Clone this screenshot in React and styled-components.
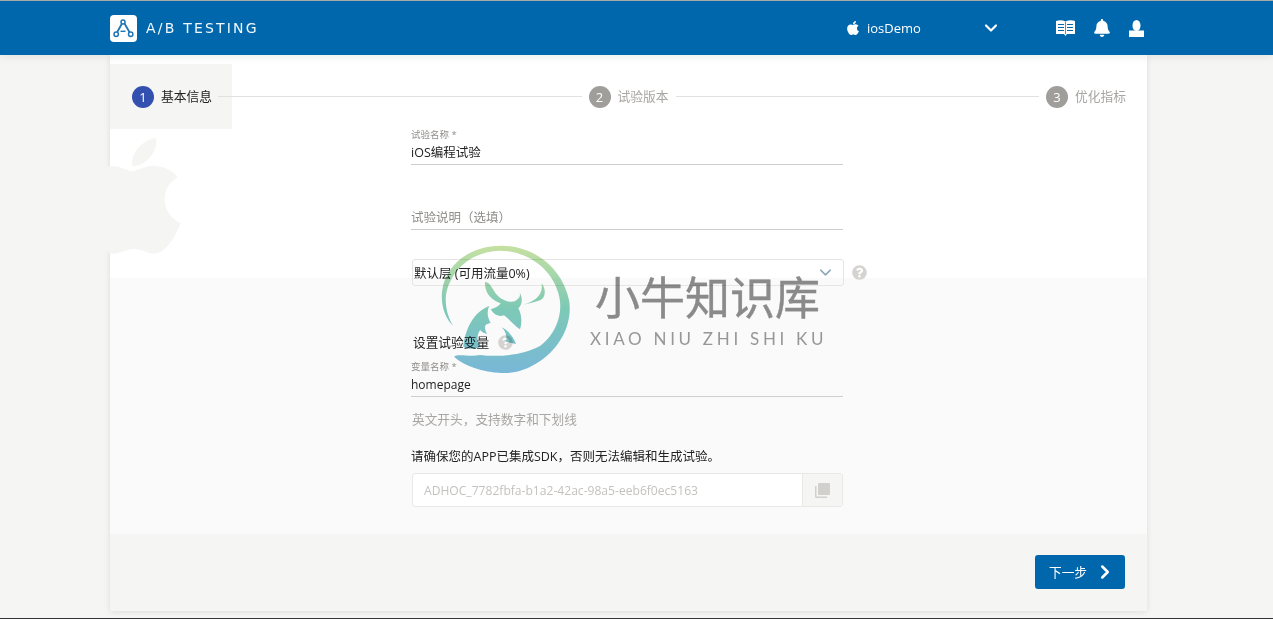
import styled, { createGlobalStyle } from 'styled-components';
import { FaApple, FaBell, FaQuestionCircle } from 'react-icons/fa';
import { FiChevronDown, FiChevronRight } from 'react-icons/fi';

const GlobalStyle = createGlobalStyle`
    * { box-sizing: border-box; }
    body {
        margin: 0;
        background: #f5f5f4;
        font-family: 'Open Sans', 'Noto Sans CJK SC', sans-serif;
        color: #222;
    }
`;

function LogoIcon() {
    return (
        <svg width="27" height="27" viewBox="0 0 27 27" fill="none" stroke="#1f76b6">
            <path d="M12 8.5 L7 17.5 M14.5 8.5 L19.7 17.5" strokeWidth="1.8" />
            <path d="M10.5 16.3 H15.5" strokeWidth="1.4" />
            <circle cx="13" cy="7" r="2" strokeWidth="1.5" />
            <circle cx="6.2" cy="19.3" r="2.2" strokeWidth="1.5" />
            <circle cx="20.7" cy="19.3" r="2.2" strokeWidth="1.5" />
        </svg>
    );
}

function BookIcon() {
    return (
        <svg width="19" height="16" viewBox="0 0 19 16">
            <path d="M0 1 C3 0 6.5 0 9.5 1.5 C12.5 0 16 0 19 1 V14 H11 L9.5 16 L8 14 H0 Z" fill="#fff" />
            <path d="M2 4.5 H8 M11 4.5 H17 M2 7.5 H8 M11 7.5 H17 M2 10.5 H8 M11 10.5 H17" stroke="#0067ac" strokeWidth="1" />
            <path d="M9.5 2 V14" stroke="#0067ac" strokeWidth="0.7" />
        </svg>
    );
}

function UserIcon() {
    return (
        <svg width="15" height="17" viewBox="0 0 15 17" fill="#fff">
            <ellipse cx="7.5" cy="5.5" rx="4" ry="5.5" />
            <rect x="0" y="10.5" width="15" height="6.5" />
        </svg>
    );
}

function CopyIcon() {
    return (
        <svg width="15" height="15" viewBox="0 0 15 15">
            <path d="M0 3 H1.5 V13.5 H12 V15 H1.5 C0.6 15 0 14.4 0 13.5 Z" fill="#d2d0cd" />
            <rect x="3" y="0" width="12" height="12" rx="1" fill="#d2d0cd" />
        </svg>
    );
}

function BullMark() {
    return (
        <svg width="150" height="140" viewBox="0 0 450 420">
            <defs>
                <linearGradient id="bull" x1="0" y1="16" x2="0" y2="400" gradientUnits="userSpaceOnUse">
                    <stop offset="0" stopColor="#c6e0a0" />
                    <stop offset="0.5" stopColor="#7fcdba" />
                    <stop offset="1" stopColor="#7abbdc" />
                </linearGradient>
            </defs>
            <g fill="url(#bull)">
                <path d="M72 350 C85 340 120 352 150 345 C210 352 280 345 330 318 C370 290 405 225 385 160 C365 85 290 32 210 32 C120 34 60 95 48 165 C44 200 55 235 70 258 C45 235 32 195 36 155 C45 75 120 16 215 17 C320 19 400 90 418 185 C427 260 385 330 320 370 C285 392 250 401 215 399 C160 396 100 378 72 350 Z" />
                <path d="M165 126 C186 126 190 165 218 178 C235 188 255 188 262 178 C270 172 272 165 268 155 C280 175 276 195 265 205 C276 225 276 250 270 268 C255 258 240 240 222 226 C205 232 190 222 182 208 C195 205 205 200 212 190 C190 182 163 165 165 126 Z" />
                <path d="M178 198 C130 215 105 270 100 320 C115 328 135 328 152 320 C130 290 150 258 182 248 C172 232 170 215 178 198 Z" />
                <path d="M280 195 C310 185 340 170 335 130 C350 150 346 175 330 181 C315 186 295 191 280 195 Z" />
                <path d="M150 270 C155 255 165 250 170 248 C162 260 165 272 172 282 C162 280 155 276 150 270 Z" />
                <path d="M215 262 C235 272 250 290 258 312 L228 305 C232 292 228 275 215 262 Z" />
            </g>
        </svg>
    );
}

export default function App() {
    return (
        <Page>
            <GlobalStyle />
            <Header>
                <Logo><LogoIcon /></Logo>
                <Brand>A/B TESTING</Brand>
                <AppSwitch>
                    <FaApple size={16} color="#fff" />
                    <AppName>iosDemo</AppName>
                    <FiChevronDown size={20} color="#fff" strokeWidth={2.6} />
                </AppSwitch>
                <HeaderIcons>
                    <BookIcon />
                    <FaBell size={18} color="#fff" />
                    <UserIcon />
                </HeaderIcons>
            </Header>
            <Card>
                <Steps>
                    <Step $active>
                        <StepNum $active>1</StepNum>
                        <StepName $active>基本信息</StepName>
                    </Step>
                    <Connector $first />
                    <Step>
                        <StepNum>2</StepNum>
                        <StepName>试验版本</StepName>
                    </Step>
                    <Connector />
                    <Step>
                        <StepNum>3</StepNum>
                        <StepName>优化指标</StepName>
                    </Step>
                </Steps>
                <Body>
                    <AppleMark><FaApple size={132} color="#f5f5f4" /></AppleMark>
                    <Form>
                        <Field>
                            <Label>试验名称 *</Label>
                            <Value>iOS编程试验</Value>
                        </Field>
                        <Field $gap={29}>
                            <Label />
                            <Value $muted>试验说明（选填）</Value>
                        </Field>
                        <SelectRow>
                            <Select>
                                默认层 (可用流量0%)
                                <FiChevronDown size={19} color="#8fa9b8" />
                            </Select>
                            <FaQuestionCircle size={15} color="#d5d3d0" />
                        </SelectRow>
                        <SectionTitle>
                            设置试验变量
                            <FaQuestionCircle size={15} color="#d5d3d0" />
                        </SectionTitle>
                        <Field $gap={11}>
                            <Label>变量名称 *</Label>
                            <Value $latin>homepage</Value>
                        </Field>
                        <Hint>英文开头，支持数字和下划线</Hint>
                        <Notice>请确保您的APP已集成SDK，否则无法编辑和生成试验。</Notice>
                        <KeyGroup>
                            <KeyText>ADHOC_7782fbfa-b1a2-42ac-98a5-eeb6f0ec5163</KeyText>
                            <CopyAddon><CopyIcon /></CopyAddon>
                        </KeyGroup>
                    </Form>
                </Body>
                <Footer>
                    <NextButton>
                        <NextLabel>下一步</NextLabel>
                        <FiChevronRight size={22} color="#fff" strokeWidth={2.8} />
                    </NextButton>
                </Footer>
            </Card>
            <Watermark>
                <BullMark />
                <WatermarkText>
                    <WatermarkName>小牛知识库</WatermarkName>
                    <WatermarkPinyin>XIAO NIU ZHI SHI KU</WatermarkPinyin>
                </WatermarkText>
            </Watermark>
        </Page>
    );
}

const Page = styled.div`
    position: relative;
    height: 100vh;
    overflow: hidden;
    border-top: 1px solid #a8a8a8;
    border-bottom: 1px solid #333;
`;

const Header = styled.header`
    position: relative;
    z-index: 2;
    height: 54px;
    padding: 0 129px 0 110px;
    display: flex;
    align-items: center;
    background: #0067ac;
    box-shadow: 0 2px 8px rgba(0, 0, 0, 0.08);
`;

const Logo = styled.div`
    width: 27px;
    height: 27px;
    border-radius: 4px;
    background: #fff;
    display: flex;
`;

const Brand = styled.div`
    margin-left: 9px;
    flex: 1;
    font-family: 'DejaVu Sans', sans-serif;
    font-size: 14px;
    letter-spacing: 2.2px;
    white-space: nowrap;
    color: #f2f8fc;
`;

const AppSwitch = styled.div`
    width: 156px;
    display: flex;
    align-items: center;
`;

const AppName = styled.span`
    margin-left: 6px;
    flex: 1;
    font-size: 13px;
    color: #fff;
`;

const HeaderIcons = styled.div`
    margin-left: 55px;
    display: flex;
    align-items: center;
    gap: 18px;
`;

const Card = styled.main`
    width: 1037px;
    margin-left: 110px;
    padding-top: 9px;
    background: #fff;
    box-shadow: 0 1px 6px rgba(0, 0, 0, 0.1);
`;

const Steps = styled.div`
    height: 65px;
    padding-right: 21px;
    display: flex;
    align-items: center;
`;

const Step = styled.div`
    height: 65px;
    padding: ${(p) => (p.$active ? '0 20px 0 22px' : '0')};
    display: flex;
    align-items: center;
    gap: 7px;
    background: ${(p) => (p.$active ? '#f5f5f4' : 'transparent')};
`;

const StepNum = styled.div`
    width: 22px;
    height: 22px;
    border-radius: 50%;
    display: flex;
    align-items: center;
    justify-content: center;
    font-size: 13px;
    color: #fff;
    background: ${(p) => (p.$active ? '#3350b0' : '#a09e9a')};
`;

const StepName = styled.div`
    padding-bottom: 2px;
    font-size: 12.75px;
    color: ${(p) => (p.$active ? '#222' : '#a8a6a3')};
`;

const Connector = styled.div`
    flex: 1;
    height: 1px;
    margin: 0 7px;
    margin-left: ${(p) => (p.$first ? '-14px' : '7px')};
    background: #e2e1df;
`;

const Body = styled.div`
    position: relative;
    padding: 0 0 27px 301px;
    background: linear-gradient(#fff 0, #fff 149px, #fafafa 149px);
`;

const AppleMark = styled.div`
    position: absolute;
    left: -44px;
    top: 1px;
    line-height: 0;
`;

const Form = styled.div`
    position: relative;
    width: 470px;
`;

const Field = styled.div`
    width: 432px;
    height: 36px;
    margin-top: ${(p) => p.$gap || 0}px;
    border-bottom: 1px solid #cfcecc;
`;

const Label = styled.div`
    height: 13px;
    font-size: 9.5px;
    line-height: 11px;
    color: #8f8d8a;
`;

const Value = styled.div`
    height: 22px;
    font-size: ${(p) => (p.$latin ? 12 : 12.5)}px;
    line-height: 22px;
    color: ${(p) => (p.$muted ? '#8f8d8a' : '#222')};
`;

const SelectRow = styled.div`
    margin-top: 29px;
    display: flex;
    align-items: center;
    gap: 8px;
`;

const Select = styled.div`
    width: 432px;
    height: 27px;
    margin-left: 1px;
    padding: 0 8px 0 1px;
    border: 1px solid #e6e5e3;
    border-radius: 3px;
    display: flex;
    align-items: center;
    justify-content: space-between;
    font-size: 12.5px;
`;

const SectionTitle = styled.div`
    margin: 48px 0 0 2px;
    height: 16px;
    display: flex;
    align-items: center;
    gap: 9px;
    font-size: 12.7px;
    line-height: 16px;
`;

const Hint = styled.div`
    margin: 14px 0 0 1px;
    font-size: 12.7px;
    line-height: 16px;
    color: #a8a6a3;
`;

const Notice = styled.div`
    margin-top: 22px;
    font-size: 12.5px;
    line-height: 16px;
`;

const KeyGroup = styled.div`
    width: 431px;
    height: 34px;
    margin: 8px 0 0 1px;
    border: 1px solid #e8e8e7;
    border-radius: 3px;
    background: #fff;
    display: flex;
    overflow: hidden;
`;

const KeyText = styled.div`
    flex: 1;
    padding-left: 11px;
    font-size: 12.1px;
    line-height: 33px;
    color: #c4c2bf;
`;

const CopyAddon = styled.div`
    width: 40px;
    display: flex;
    align-items: center;
    justify-content: center;
    border-left: 1px solid #e8e8e7;
    background: #f5f5f4;
`;

const Footer = styled.div`
    position: relative;
    height: 77px;
    padding: 21px 22px 0 0;
    display: flex;
    justify-content: flex-end;
    align-items: flex-start;
    background: #f5f5f4;
`;

const NextButton = styled.button`
    width: 90px;
    height: 34px;
    padding: 0 9px 0 14px;
    border: 0;
    border-radius: 3px;
    display: flex;
    align-items: center;
    justify-content: space-between;
    font-family: inherit;
    color: #fff;
    background: #0067ac;
`;

const NextLabel = styled.span`
    padding-bottom: 2px;
    font-size: 12.7px;
`;

const Watermark = styled.div`
    position: absolute;
    left: 430px;
    top: 239px;
    z-index: 3;
    display: flex;
    pointer-events: none;
    mix-blend-mode: multiply;
`;

const WatermarkText = styled.div`
    margin: 26px 0 0 10px;
    display: flex;
    flex-direction: column;
`;

const WatermarkName = styled.div`
    margin-left: 5px;
    font-family: 'Noto Sans CJK SC', sans-serif;
    font-size: 45px;
    line-height: 60px;
    color: #8d8d8d;
    -webkit-text-stroke: 0.4px #8d8d8d;
`;

const WatermarkPinyin = styled.div`
    margin-top: 3px;
    font-family: 'Lato', sans-serif;
    font-size: 17px;
    font-weight: 400;
    line-height: 20px;
    letter-spacing: 3.7px;
    white-space: nowrap;
    color: #9a9a9a;
`;
